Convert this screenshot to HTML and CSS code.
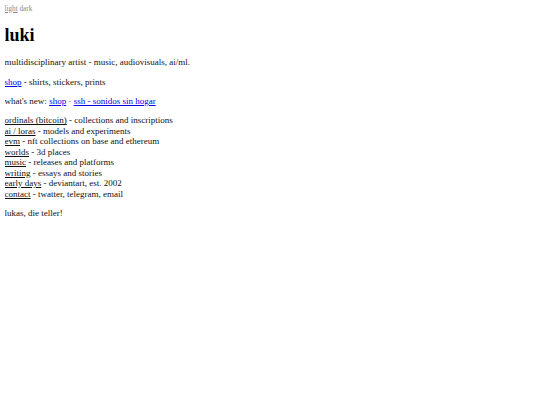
FILE: index.html
```html
<!DOCTYPE html>
<html>
<head>
<meta charset="utf-8">
<link rel="stylesheet" href="styles.css">
</head>
<body>
<div class="theme"><a href="#" class="theme-link">light</a> <span>dark</span></div>
<h1 class="title">luki</h1>
<p class="para">multidisciplinary artist - music, audiovisuals, ai/ml.</p>
<p class="para"><a href="#" class="blue">shop</a> - shirts, stickers, prints</p>
<p class="para">what's new: <a href="#" class="blue">shop</a> · <a href="#" class="blue">ssh - sonidos sin hogar</a></p>
<p class="para">
<a href="#" class="dark">ordinals (bitcoin)</a> - collections and inscriptions<br>
<a href="#" class="dark">ai / loras</a> - models and experiments<br>
<a href="#" class="dark">evm</a> - nft collections on base and ethereum<br>
<a href="#" class="dark">worlds</a> - 3d places<br>
<a href="#" class="dark">music</a> - releases and platforms<br>
<a href="#" class="dark">writing</a> - essays and stories<br>
<a href="#" class="dark">early days</a> - deviantart, est. 2002<br>
<a href="#" class="dark">contact</a> - twatter, telegram, email
</p>
<p class="para">lukas, die teller!</p>
</body>
</html>
```
FILE: styles.css
```css
html { background: #fff; }
body {
  margin: 4.5px;
  font-family: "Liberation Serif", "Times New Roman", serif;
  font-size: 9px;
  line-height: 10.45px;
  color: #111;
}
.theme {
  font-size: 7.2px;
  line-height: 8.3px;
  color: #888;
}
.theme-link { color: #888; }
.title {
  font-size: 18px;
  line-height: 20.7px;
  margin: 12px 0 11.6px;
  color: #000;
}
.para { margin: 9px 0; }
.blue { color: #0000ee; }
.dark { color: #111; }
```
